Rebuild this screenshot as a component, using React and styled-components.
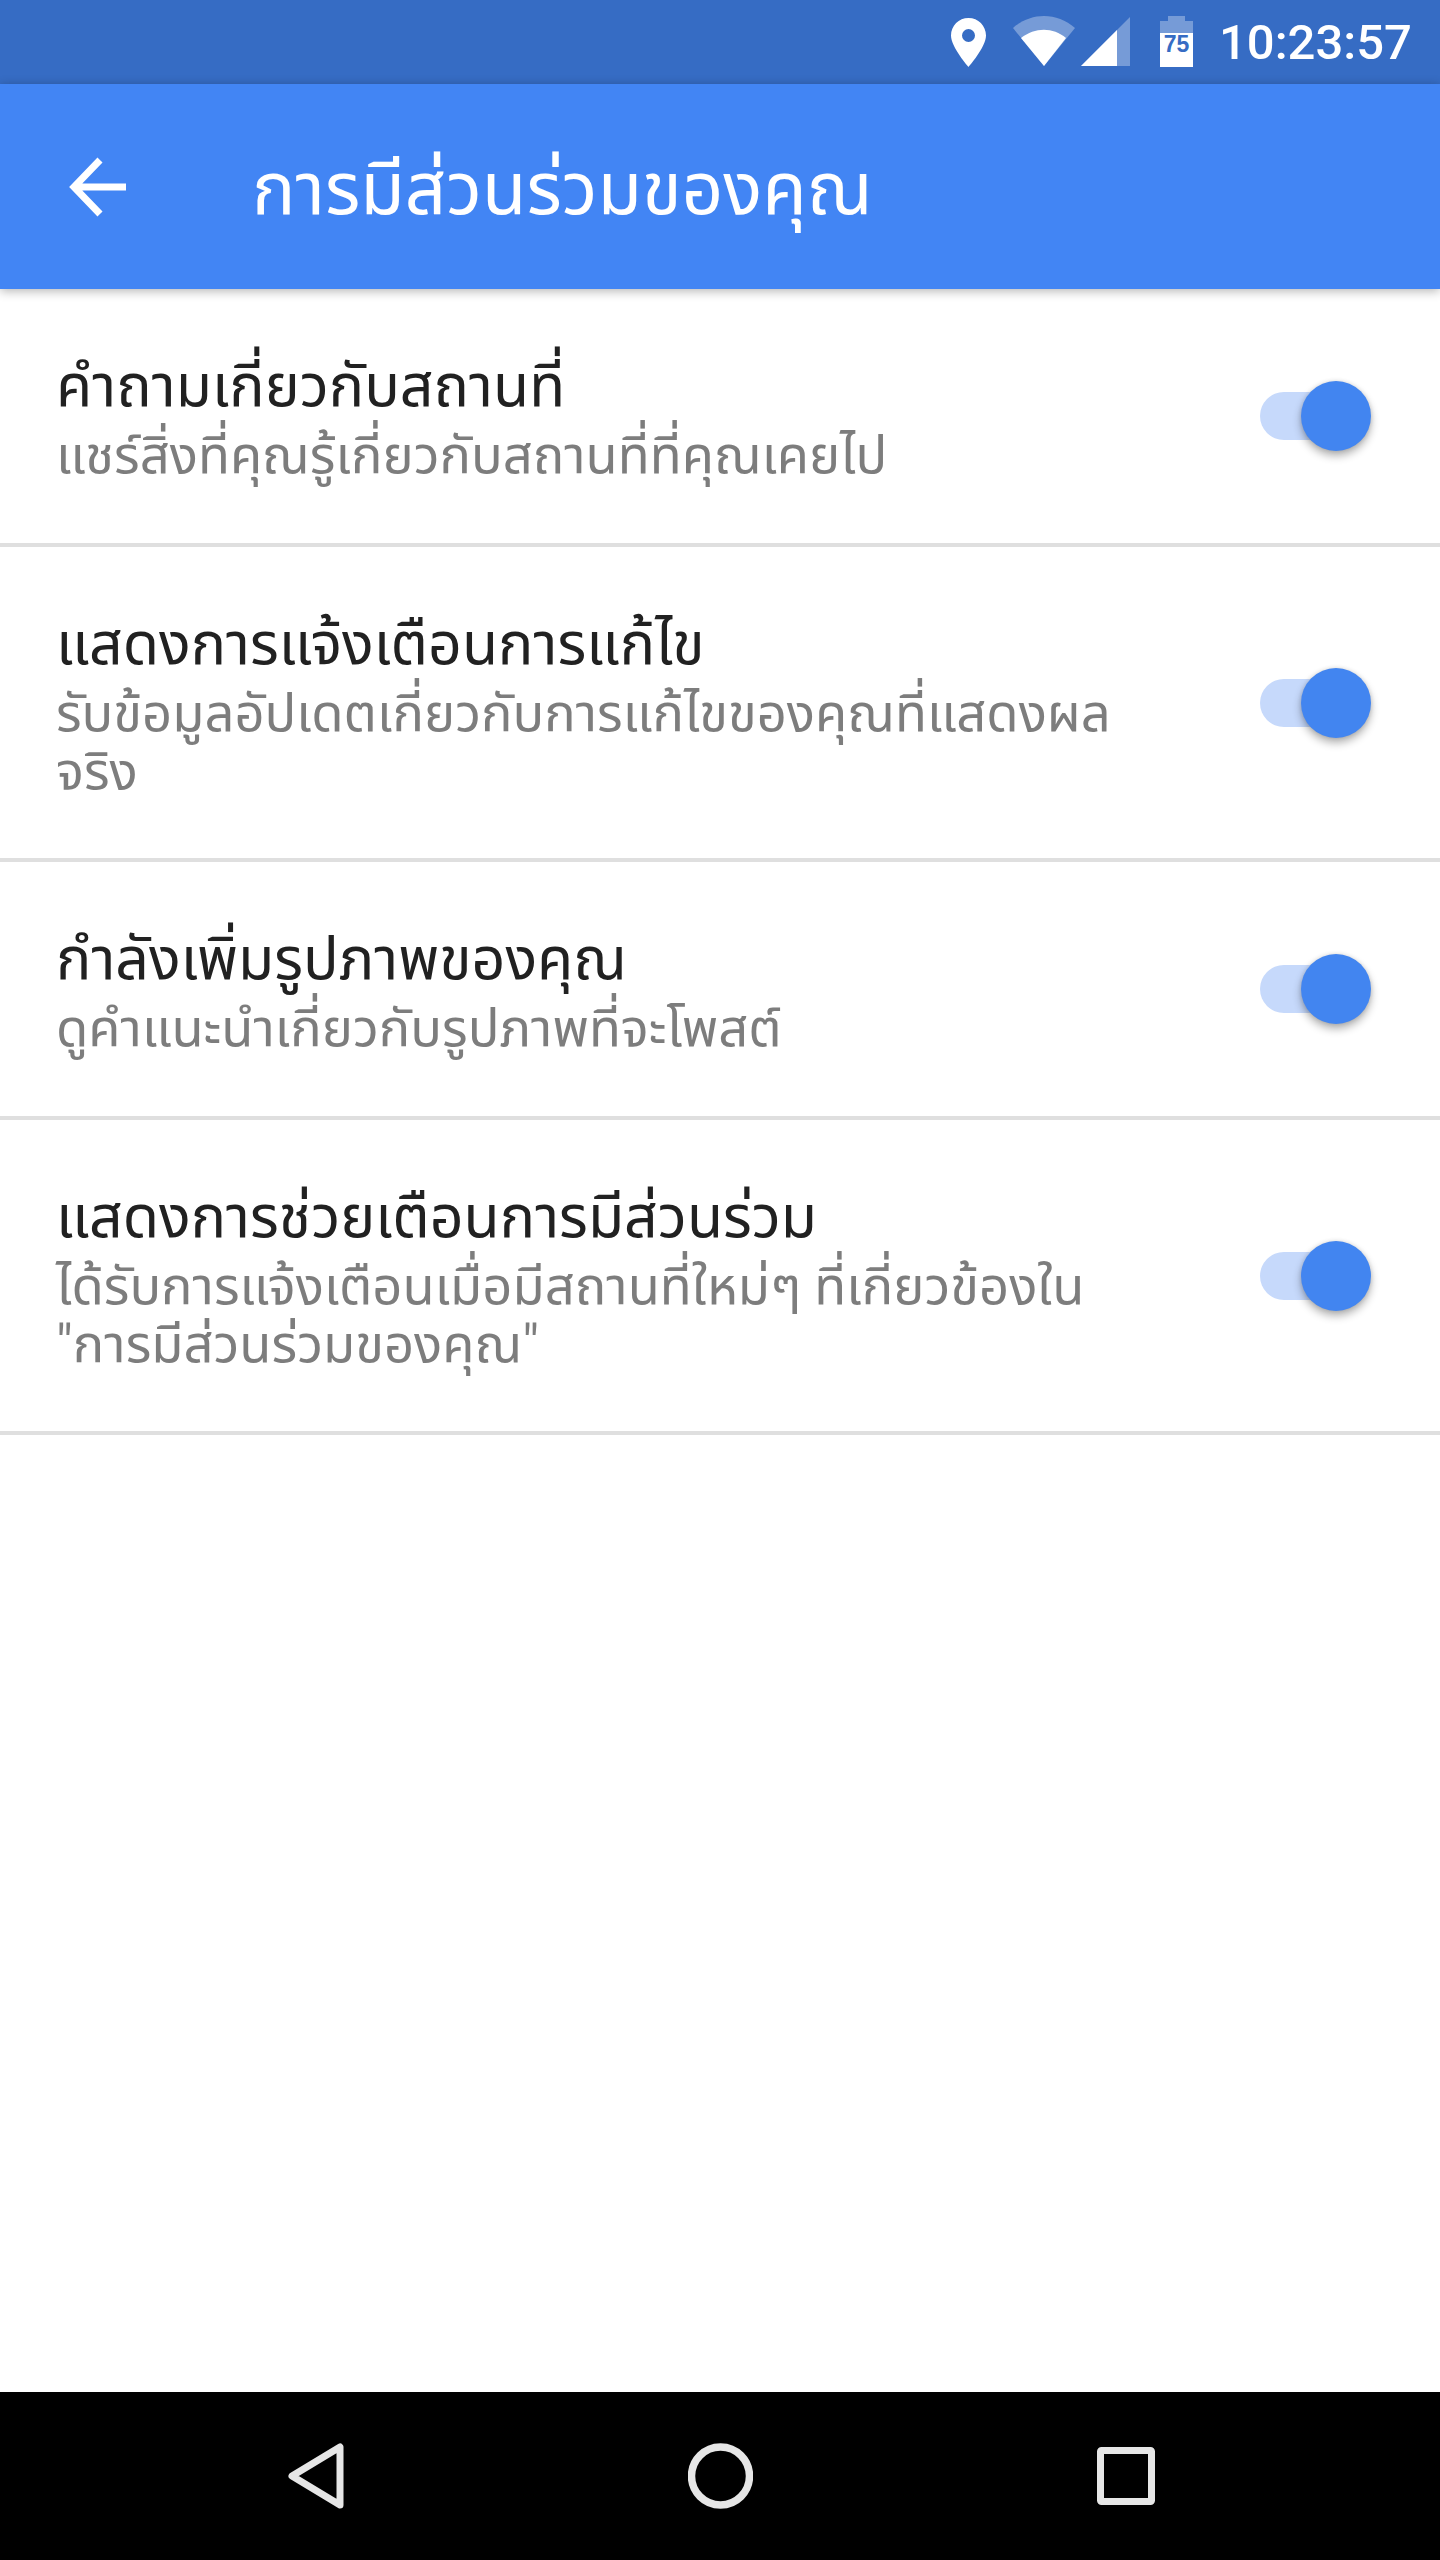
import React from 'react';
import styled, { createGlobalStyle } from 'styled-components';

const Global = createGlobalStyle`
  html, body { margin: 0; padding: 0; background: #fff; }
  body { font-family: Roboto, "Noto Sans Thai", "Noto Sans", sans-serif; }
`;
const Screen = styled.div`
  width: 1440px; height: 2560px; display: flex; flex-direction: column; background: #fff; overflow: hidden;
`;
const StatusBar = styled.div`
  height: 84px; background: #366cc4; display: flex; align-items: flex-start; flex: none;
  padding: 16px 0 0 951px; box-sizing: border-box; color: #fff;
`;
const Clock = styled.span`
  font: 500 49px/1 Roboto, sans-serif; margin: 2px 0 0 26px;
`;
const StatusIcon = styled.svg`
  display: block; flex: none; width: ${p => p.$w}px; height: 52px; margin-left: ${p => p.$ml || 0}px;
`;
const BatteryLabel = styled.text`
  font: 700 23px "Liberation Sans", sans-serif; fill: #366cc4; text-anchor: middle;
`;
const Toolbar = styled.header`
  height: 205px; background: #4285f4; display: flex; align-items: center; flex: none; position: relative;
  box-shadow: 0 2px 10px rgba(0,0,0,.3); color: #fff;
`;
const BackIcon = styled.svg`
  width: 64px; height: 64px; margin-left: 66px; flex: none;
`;
const Title = styled.h1`
  margin: 6px 0 0 122px; font-weight: 400; font-size: 72.5px; line-height: 80px;
`;
const List = styled.main`
  flex: 1; display: flex; flex-direction: column;
`;
const Row = styled.section`
  display: flex; align-items: center; justify-content: space-between; height: ${p => p.$h}px;
  box-sizing: border-box; padding: 0 69px 0 56px; border-bottom: 4px solid #dfdfdf;
`;
const Text = styled.div`
  width: 1070px; margin-top: 6px;
`;
const Heading = styled.div`
  font-size: 59px; line-height: 64px; color: #212121;
`;
const Sub = styled.div`
  font-size: 52.5px; line-height: 58px; color: #7d7d7d; margin-top: 8px;
`;
const Switch = styled.div`
  position: relative; width: 111px; height: 70px; flex: none;
`;
const Track = styled.div`
  position: absolute; left: 0; top: 11px; width: 98px; height: 48px; border-radius: 24px; background: #c6d9fb;
`;
const Thumb = styled.div`
  position: absolute; right: 0; top: 0; width: 70px; height: 70px; border-radius: 50%; background: #4285f0;
  box-shadow: 0 5px 8px rgba(0,0,0,.3), 0 0 4px rgba(0,0,0,.12);
`;
const NavBar = styled.nav`
  height: 168px; background: #000; flex: none; display: flex; align-items: center; gap: 344px;
  padding-left: 288px; box-sizing: border-box;
`;
const NavIcon = styled.svg`
  width: ${p => p.$w}px; height: 66px; display: block; flex: none;
`;

const rows = [
  { h: 258, t: 'คำถามเกี่ยวกับสถานที่', s: 'แชร์สิ่งที่คุณรู้เกี่ยวกับสถานที่ที่คุณเคยไป' },
  { h: 315, t: 'แสดงการแจ้งเตือนการแก้ไข', s: 'รับข้อมูลอัปเดตเกี่ยวกับการแก้ไขของคุณที่แสดงผลจริง' },
  { h: 258, t: 'กำลังเพิ่มรูปภาพของคุณ', s: 'ดูคำแนะนำเกี่ยวกับรูปภาพที่จะโพสต์' },
  { h: 315, t: 'แสดงการช่วยเตือนการมีส่วนร่วม', s: 'ได้รับการแจ้งเตือนเมื่อมีสถานที่ใหม่ๆ ที่เกี่ยวข้องใน "การมีส่วนร่วมของคุณ"' },
];

export default function App() {
  return (
    <Screen>
      <Global />
      <StatusBar>
        <StatusIcon $w={35} viewBox="0 0 35 52">
          <path fill="#fff" fillRule="evenodd" d="M17.500 2C7.800 2 0 9.800 0 19.500 0 31 17.500 51 17.500 51S35 31 35 19.500C35 9.800 27.200 2 17.500 2zm0 11a6.500 6.500 0 1 1 0 13 6.500 6.500 0 0 1 0-13z" />
        </StatusIcon>
        <StatusIcon $w={62} $ml={27} viewBox="0 0 62 52">
          <path fill="#fff" fillOpacity=".32" d="M0 12C18-4 44-4 62 12L31 50z" />
          <path fill="#fff" d="M8 22C22 11 40 11 53 22L31 50z" />
        </StatusIcon>
        <StatusIcon $w={49} $ml={6} viewBox="0 0 49 52">
          <path fill="#fff" fillOpacity=".32" d="M49 1V50H0z" />
          <path fill="#fff" d="M36 14V50H0z" />
        </StatusIcon>
        <StatusIcon $w={33} $ml={30} viewBox="0 0 33 52">
          <path fill="#fff" fillOpacity=".32" d="M8 0h17v5h8v12H0V5h8z" />
          <path fill="#fff" d="M0 17h33v34H0z" />
          <BatteryLabel x="16.500" y="36">75</BatteryLabel>
        </StatusIcon>
        <Clock>10:23:57</Clock>
      </StatusBar>
      <Toolbar>
        <BackIcon viewBox="0 0 64 64">
          <path fill="none" stroke="#fff" strokeWidth="7" d="M60 32H9M34 5L8 32l26 27" />
        </BackIcon>
        <Title>การมีส่วนร่วมของคุณ</Title>
      </Toolbar>
      <List>
        {rows.map(r => (
          <Row key={r.t} $h={r.h}>
            <Text>
              <Heading>{r.t}</Heading>
              <Sub>{r.s}</Sub>
            </Text>
            <Switch><Track /><Thumb /></Switch>
          </Row>
        ))}
      </List>
      <NavBar>
        <NavIcon $w={56} viewBox="0 0 56 66">
          <path fill="none" stroke="#e6e6e6" strokeWidth="7" strokeLinejoin="round" d="M52 4V62L4 33z" />
        </NavIcon>
        <NavIcon $w={65} viewBox="0 0 65 66">
          <circle cx="32.500" cy="33" r="29" fill="none" stroke="#e6e6e6" strokeWidth="7.500" />
        </NavIcon>
        <NavIcon $w={58} viewBox="0 0 58 66">
          <rect x="3.500" y="7.500" width="51" height="51" rx="1" fill="none" stroke="#e6e6e6" strokeWidth="7" />
        </NavIcon>
      </NavBar>
    </Screen>
  );
}
